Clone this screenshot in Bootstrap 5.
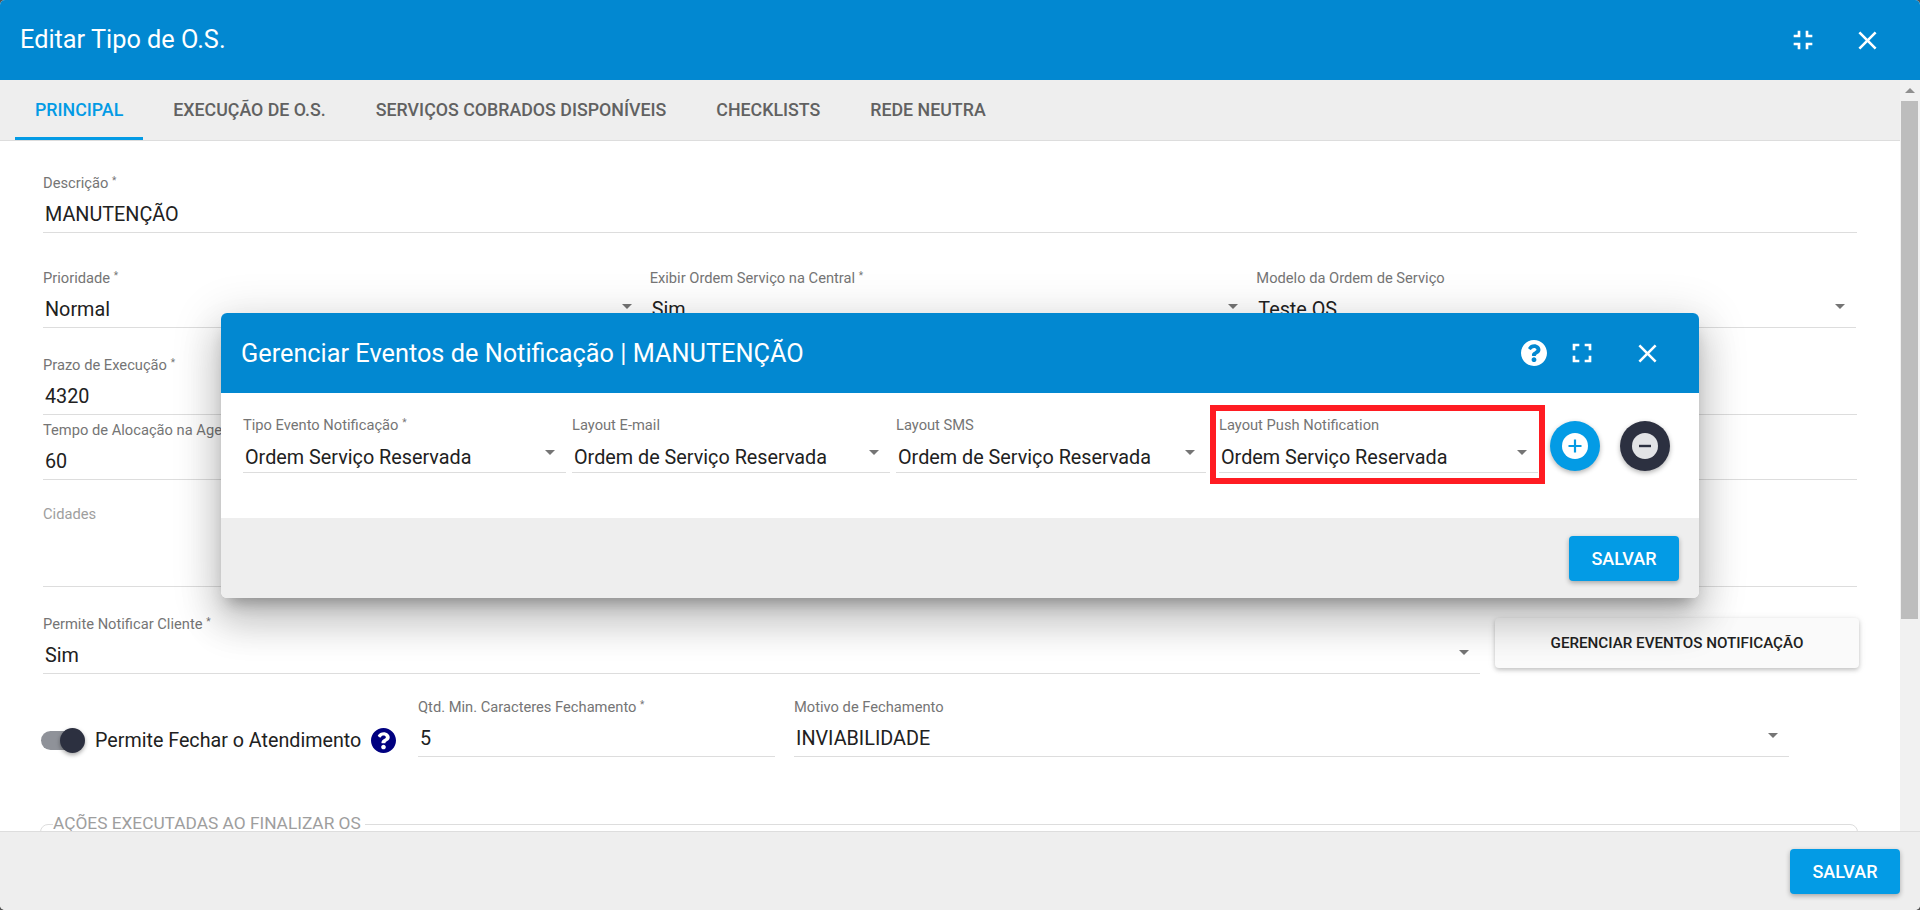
<!DOCTYPE html>
<html lang="pt-BR">
<head>
<meta charset="utf-8">
<title>Editar Tipo de O.S.</title>
<link href="https://cdn.jsdelivr.net/npm/bootstrap@5.3.0/dist/css/bootstrap.min.css" rel="stylesheet">
<style>
html,body{height:100%;margin:0;overflow:hidden;background:#555;font-family:Roboto,"Liberation Sans",sans-serif;color:#212121}
.win{height:910px;border-radius:5px;overflow:hidden;background:#fff;position:relative}
.bar-top{height:80px;flex:none;background:#0288d1;color:#fff;padding:0 37px 0 20px}
.bar-title{font-size:25.3px;font-weight:400;margin:0;line-height:1}
.ico-btn{background:none;border:0;padding:0;line-height:0;color:#fff;display:block}
.ico-btn svg{fill:currentColor;display:block}
.mid{min-height:0}
.tabs-bar{height:61px;background:#eee;border-bottom:1px solid #ddd;padding-left:15px;flex:none;flex-wrap:nowrap;gap:10px}
.tab-link{height:60px;padding:3px 20px 0;display:flex;align-items:center;font-size:17.8px;font-weight:500;color:#616161;text-transform:uppercase;text-decoration:none;border-bottom:3px solid transparent;white-space:nowrap}
.tab-link.on{color:#039be5;border-bottom-color:#039be5}
.main-area{overflow:hidden;padding:32px 43px 0 43px;min-height:0}
.sbar{width:20px;flex:none;background:#f1f1f1;padding:0 2px 0 1px}
.sbar-up{height:21px;padding-top:8px}
.sbar-up i{display:block;width:0;margin:0 auto;border:5px solid transparent;border-top:0;border-bottom:5px solid #8f8f8f}
.sbar-thumb{height:518px;background:#bdbdbd}
.fld{display:block}
.fld-label{display:block;font-size:14.7px;line-height:20px;color:#757575;margin:0;white-space:nowrap}
.fld-label sup{font-size:10px;top:-.4em}
.fld-label.dim{color:#9e9e9e}
.fld-val{height:40px;border:0;border-bottom:1px solid #ddd;border-radius:0;padding:0 11px 0 2px;background:none;font-size:19.8px;line-height:40px;color:#212121;display:flex;justify-content:space-between;align-items:center}
.fld-val>span{padding-top:5px}
.fld-tall{height:63px}
.caret-dn{width:0;height:0;border:5px solid transparent;border-bottom:0;border-top:5px solid #757575;flex:none;margin-top:-2px}
.row-tight{--bs-gutter-x:7px;margin-right:-2.5px}
.mb-a{margin-bottom:35px}
.mb-b{margin-bottom:27px}
.mb-c{margin-bottom:5px}
.mb-d{margin-bottom:24px}
.mb-e{margin-bottom:27px}
.mb-f{margin-bottom:23px}
.mb-g{margin-bottom:58px}
.grow-gap{gap:15px}
.btn-light-ev{width:364px;height:50px;margin:4px -2px 0 0;flex:none;background:#fafafa;border:0;border-radius:4px;font-size:15.2px;font-weight:500;color:#212121;text-transform:uppercase;white-space:nowrap;box-shadow:0 2px 4px rgba(0,0,0,.2),0 1px 8px rgba(0,0,0,.08)}
.tog-wrap{width:358px;margin-left:-2px;flex:none;padding-top:31px;gap:10px}
.tog{width:44px;height:25px;position:relative;flex:none}
.tog-track{display:block;position:absolute;left:0;top:3px;width:38px;height:19px;border-radius:10px;background:#8f9299}
.tog-knob{display:block;position:absolute;right:0;top:0;width:25px;height:25px;border-radius:50%;background:#2c3040;box-shadow:0 2px 4px rgba(0,0,0,.35)}
.tog-text{font-size:19.7px;line-height:25px;color:#212121;white-space:nowrap}
.tog-help{fill:#000080;display:block;flex:none}
.w-qtd{width:357px;flex:none}
.w-mot{width:995px;flex:none}
.row-gap{gap:19px}
.fset{border:1px solid #ddd;border-radius:8px;margin:0 -1px 0 -3px;padding:0 12px;min-height:60px}
.fset legend{float:none;width:auto;font-size:17.3px;line-height:16px;color:#9e9e9e;margin:0;padding:0 4px 2px 0;text-transform:uppercase;white-space:nowrap}
.bar-bottom{height:79px;flex:none;background:#eee;border-top:1px solid #ddd;padding:17px 20px 0 0}
.btn-save{width:110px;height:45px;background:#039be5;border:0;color:#fff;font-size:18px;font-weight:500;border-radius:4px;text-transform:uppercase;padding:0;box-shadow:0 2px 5px rgba(0,0,0,.3)}
.dlg{position:absolute;left:221px;top:313px;width:1478px;height:285px;border-radius:6px;background:#fff;box-shadow:0 11px 15px -7px rgba(0,0,0,.3),0 24px 38px 3px rgba(0,0,0,.16),0 9px 46px 8px rgba(0,0,0,.12)}
.dlg-head{height:80px;background:#0288d1;color:#fff;border-radius:6px 6px 0 0;padding:0 36px 0 20px}
.dlg-head .bar-title{padding-top:2px}
.dlg-body{height:125px;padding:12px 0 0 22px;gap:6px}
.dlg-body .fld-val>span{padding-top:9px}
.dlg-foot{height:80px;background:#eee;border-radius:0 0 6px 6px;padding:18px 20px 0 0}
.dlg-fld{flex:none;padding-top:10px}
.dlg-fld .fld-val{height:38px}
.w-1{width:323px}.w-2{width:318px}.w-3{width:310px;margin-right:-1px}
.red-box{width:335px;height:79px;border:6px solid #ff1c22;padding:4px 1px 0 3px;flex:none;margin-left:-1px}
.red-box .fld-val{width:319px;height:38px}
.fab{width:50px;height:50px;border-radius:50%;border:0;padding:0;box-shadow:0 2px 5px rgba(0,0,0,.3);flex:none;display:flex;align-items:center;justify-content:center;margin-top:16px}
.fab-add{background:#039be5;margin-left:-1px}
.fab-del{background:#2c3040;margin-left:14px}
</style>
</head>
<body>
<div class="win d-flex flex-column">
  <div class="bar-top d-flex align-items-center justify-content-between">
    <h5 class="bar-title">Editar Tipo de O.S.</h5>
    <div class="d-flex align-items-center" style="gap:33px">
      <button class="ico-btn" type="button" aria-label="Reduzir"><svg width="32" height="32" viewBox="0 0 24 24"><path d="M5 16h3v3h2v-5H5v2zm3-8H5v2h5V5H8v3zm6 11h2v-3h3v-2h-5v5zm2-11V5h-2v5h5V8h-3z"/></svg></button>
      <button class="ico-btn" type="button" aria-label="Fechar"><svg width="31" height="31" viewBox="0 0 24 24"><path d="M19 6.41L17.59 5 12 10.59 6.41 5 5 6.41 10.59 12 5 17.59 6.41 19 12 13.41 17.59 19 19 17.59 13.41 12z"/></svg></button>
    </div>
  </div>

  <div class="d-flex flex-fill mid">
    <div class="flex-fill d-flex flex-column" style="min-width:0">
      <nav class="nav tabs-bar">
        <a class="tab-link on" href="#">Principal</a>
        <a class="tab-link" href="#">Execução de O.S.</a>
        <a class="tab-link" href="#">Serviços Cobrados Disponíveis</a>
        <a class="tab-link" href="#">Checklists</a>
        <a class="tab-link" href="#">Rede Neutra</a>
      </nav>
      <div class="main-area flex-fill">
        <div class="fld mb-a">
          <label class="fld-label">Descrição <sup>*</sup></label>
          <div class="fld-val"><span>MANUTENÇÃO</span></div>
        </div>
        <div class="row row-tight mb-b">
          <div class="col-4"><label class="fld-label">Prioridade <sup>*</sup></label><div class="fld-val"><span>Normal</span><i class="caret-dn"></i></div></div>
          <div class="col-4"><label class="fld-label">Exibir Ordem Serviço na Central <sup>*</sup></label><div class="fld-val"><span>Sim</span><i class="caret-dn"></i></div></div>
          <div class="col-4"><label class="fld-label">Modelo da Ordem de Serviço</label><div class="fld-val"><span>Teste OS</span><i class="caret-dn"></i></div></div>
        </div>
        <div class="fld mb-c">
          <label class="fld-label">Prazo de Execução <sup>*</sup></label>
          <div class="fld-val"><span>4320</span></div>
        </div>
        <div class="fld mb-d">
          <label class="fld-label">Tempo de Alocação na Agenda <sup>*</sup></label>
          <div class="fld-val"><span>60</span></div>
        </div>
        <div class="fld mb-e">
          <label class="fld-label dim">Cidades</label>
          <div class="fld-val fld-tall"></div>
        </div>
        <div class="d-flex grow-gap mb-f">
          <div class="flex-fill"><label class="fld-label">Permite Notificar Cliente <sup>*</sup></label><div class="fld-val"><span>Sim</span><i class="caret-dn"></i></div></div>
          <button class="btn btn-light-ev" type="button">Gerenciar Eventos Notificação</button>
        </div>
        <div class="d-flex row-gap mb-g">
          <div class="d-flex align-items-start tog-wrap">
            <span class="tog"><span class="tog-track"></span><span class="tog-knob"></span></span>
            <span class="tog-text">Permite Fechar o Atendimento</span>
            <svg class="tog-help" width="25" height="25" viewBox="8 8 496 496"><path d="M504 256c0 136.997-111.043 248-248 248S8 392.997 8 256C8 119.083 119.043 8 256 8s248 111.083 248 248zM262.655 90c-54.497 0-89.255 22.957-116.549 63.758-3.536 5.286-2.353 12.415 2.715 16.258l34.699 26.31c5.205 3.947 12.621 3.008 16.665-2.122 17.864-22.658 30.113-35.797 57.303-35.797 20.429 0 45.698 13.148 45.698 32.958 0 14.976-12.363 22.667-32.534 33.976C247.128 238.528 216 254.941 216 296v4c0 6.627 5.373 12 12 12h56c6.627 0 12-5.373 12-12v-1.333c0-28.462 83.186-29.647 83.186-106.667 0-58.002-60.165-102-116.531-102zM256 338c-25.365 0-46 20.635-46 46 0 25.364 20.635 46 46 46s46-20.636 46-46c0-25.365-20.635-46-46-46z"/></svg>
          </div>
          <div class="w-qtd"><label class="fld-label">Qtd. Min. Caracteres Fechamento <sup>*</sup></label><div class="fld-val"><span>5</span></div></div>
          <div class="w-mot"><label class="fld-label">Motivo de Fechamento</label><div class="fld-val"><span>INVIABILIDADE</span><i class="caret-dn"></i></div></div>
        </div>
        <fieldset class="fset"><legend>Ações Executadas ao Finalizar OS</legend></fieldset>
      </div>
    </div>
    <div class="sbar"><div class="sbar-up"><i></i></div><div class="sbar-thumb"></div></div>
  </div>

  <div class="bar-bottom d-flex justify-content-end align-items-start">
    <button class="btn btn-save" type="button">Salvar</button>
  </div>

  <div class="dlg">
    <div class="dlg-head d-flex align-items-center justify-content-between">
      <h5 class="bar-title">Gerenciar Eventos de Notificação | MANUTENÇÃO</h5>
      <div class="d-flex align-items-center">
        <button class="ico-btn" type="button" aria-label="Ajuda" style="margin-right:19px"><svg width="26" height="26" viewBox="8 8 496 496"><path d="M504 256c0 136.997-111.043 248-248 248S8 392.997 8 256C8 119.083 119.043 8 256 8s248 111.083 248 248zM262.655 90c-54.497 0-89.255 22.957-116.549 63.758-3.536 5.286-2.353 12.415 2.715 16.258l34.699 26.31c5.205 3.947 12.621 3.008 16.665-2.122 17.864-22.658 30.113-35.797 57.303-35.797 20.429 0 45.698 13.148 45.698 32.958 0 14.976-12.363 22.667-32.534 33.976C247.128 238.528 216 254.941 216 296v4c0 6.627 5.373 12 12 12h56c6.627 0 12-5.373 12-12v-1.333c0-28.462 83.186-29.647 83.186-106.667 0-58.002-60.165-102-116.531-102zM256 338c-25.365 0-46 20.635-46 46 0 25.364 20.635 46 46 46s46-20.636 46-46c0-25.365-20.635-46-46-46z"/></svg></button>
        <button class="ico-btn" type="button" aria-label="Expandir" style="margin-right:34px"><svg width="32" height="32" viewBox="0 0 24 24"><path d="M7 14H5v5h5v-2H7v-3zm-2-4h2V7h3V5H5v5zm12 7h-3v2h5v-5h-2v3zM14 5v2h3v3h2V5h-5z"/></svg></button>
        <button class="ico-btn" type="button" aria-label="Fechar"><svg width="31" height="31" viewBox="0 0 24 24"><path d="M19 6.41L17.59 5 12 10.59 6.41 5 5 6.41 10.59 12 5 17.59 6.41 19 12 13.41 17.59 19 19 17.59 13.41 12z"/></svg></button>
      </div>
    </div>
    <div class="dlg-body d-flex align-items-start">
      <div class="dlg-fld w-1"><label class="fld-label">Tipo Evento Notificação <sup>*</sup></label><div class="fld-val"><span>Ordem Serviço Reservada</span><i class="caret-dn"></i></div></div>
      <div class="dlg-fld w-2"><label class="fld-label">Layout E-mail</label><div class="fld-val"><span>Ordem de Serviço Reservada</span><i class="caret-dn"></i></div></div>
      <div class="dlg-fld w-3"><label class="fld-label">Layout SMS</label><div class="fld-val"><span>Ordem de Serviço Reservada</span><i class="caret-dn"></i></div></div>
      <div class="red-box"><label class="fld-label">Layout Push Notification</label><div class="fld-val"><span>Ordem Serviço Reservada</span><i class="caret-dn"></i></div></div>
      <button class="fab fab-add" type="button" aria-label="Adicionar"><svg width="26" height="26" viewBox="0 0 26 26"><circle cx="13" cy="13" r="13" fill="#fff"/><path d="M13 6.5v13M6.5 13h13" stroke="#039be5" stroke-width="2.2"/></svg></button>
      <button class="fab fab-del" type="button" aria-label="Remover"><svg width="26" height="26" viewBox="0 0 26 26"><circle cx="13" cy="13" r="13" fill="#e2e3e6"/><path d="M7 13h12" stroke="#2c3040" stroke-width="2.4"/></svg></button>
    </div>
    <div class="dlg-foot d-flex justify-content-end align-items-start">
      <button class="btn btn-save" type="button">Salvar</button>
    </div>
  </div>
</div>
<script src="https://cdn.jsdelivr.net/npm/bootstrap@5.3.0/dist/js/bootstrap.bundle.min.js"></script>
</body>
</html>
